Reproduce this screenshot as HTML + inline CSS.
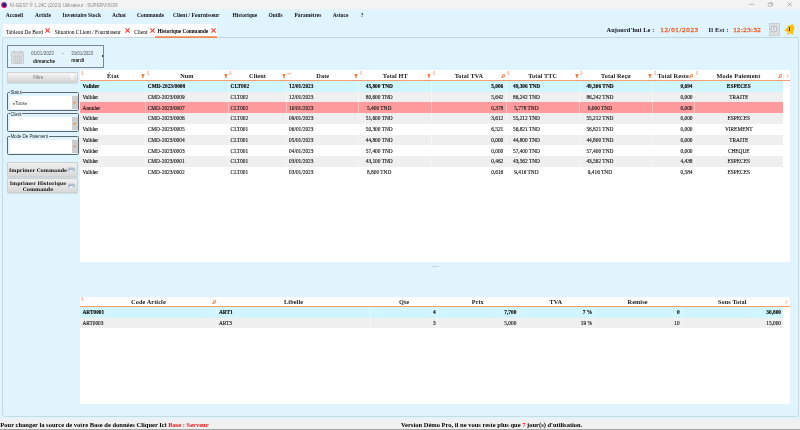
<!DOCTYPE html>
<html lang="fr"><head><meta charset="utf-8"><title>KI-GEST - Historique Commande</title>
<style>
*{box-sizing:border-box;margin:0;padding:0}
html,body{width:800px;height:430px;overflow:hidden;background:#e0f4fd}
body{position:relative;font-family:"Liberation Serif",serif;font-size:5.6px;color:#111;line-height:1}
#w{position:absolute;left:0;top:0;width:800px;height:430px;will-change:transform}
.a{position:absolute;white-space:nowrap}
.b{font-weight:bold}
.sans{font-family:"Liberation Sans",sans-serif}
#titlebar{left:0;top:0;width:800px;height:9.3px;background:#f3f3f3}
#title{left:9.800px;top:4.200px;font-size:4.65px;color:#8c8c8c}
.menu{top:12.9px;font-size:5.45px;font-weight:bold;color:#10101a}
#tabs{left:3px;top:24px;width:214px;height:13.3px;background:#fff}
.tab{top:29.5px;font-size:5.45px;color:#000}
#panel{left:2px;top:37px;width:797px;height:379.5px;border:1px solid #c9dae3;border-radius:3px;background:#e0f4fd}
#status{left:0;top:419.3px;width:800px;height:10.7px;background:#f0f0f0;border-bottom:1px solid #a5a5a5}
.st{top:421.6px;font-size:6.5px;font-weight:bold;color:#000}
.red{color:#f41414}
.org{color:#f0703a}
.tbl{background:#fff}
.hdr{font-weight:bold;font-size:6.25px;color:#1a1a1a;text-align:center;letter-spacing:.1px}
.row{left:80.3px;width:702.7px;height:10.73px}
.c{font-size:5.35px;color:#141414;-webkit-text-stroke:.12px #141414}
.sel .c{font-weight:bold;color:#000}
.grp{border:1px solid #5e686e;border-radius:1.5px}
.lbl{font-family:"Liberation Sans",sans-serif;font-size:4.5px;letter-spacing:-.06px;color:#2a2a2a;background:#e0f4fd;padding:0 .6px}
.inp{background:#fff}
.dd{background:#cdcdcd}
.btn{border:1px solid #cfcfcf;border-radius:1px;background:linear-gradient(#efefef,#d9d9d9);box-shadow:0 .6px .6px rgba(0,0,0,.18)}
.btxt{font-family:"DejaVu Serif",serif;font-weight:bold;font-size:4.85px;color:#111;text-align:center}
</style></head><body><div id="w">

<div class="a" id="titlebar"></div>
<svg class="a" style="left:1px;top:1.500px" width="6.200" height="6.200" viewBox="0 0 14 14"><defs><linearGradient id="lg" x1="0" y1="1" x2="1" y2="0"><stop offset="0" stop-color="#f0207a"/><stop offset=".45" stop-color="#c02a90"/><stop offset="1" stop-color="#3a78e0"/></linearGradient></defs><circle cx="7" cy="7" r="6.800" fill="url(#lg)"/><circle cx="7.300" cy="6.700" r="3.900" fill="#1c1548"/></svg>
<div class="a" style="left:0;top:9px;width:800px;height:1px;background:#e8f3f9"></div>
<div class="a sans" id="title">KI-GEST ® 1.24C (2023) Utilisateur : SUPERVISOR</div>
<svg class="a" style="left:745px;top:0" width="55" height="9.300" viewBox="0 0 55 9.300"><path d="M4.200 4.400h4.600" stroke="#8a8a8a" stroke-width=".55" fill="none"/><rect x="23.200" y="3.200" width="3.600" height="3.100" rx=".8" stroke="#8a8a8a" stroke-width=".55" fill="none"/><path d="M24.300 2.600h2.600a.8 .8 0 0 1 .8 .8v2.200" stroke="#8a8a8a" stroke-width=".5" fill="none"/><path d="M42.500 2.400l4.400 3.900M46.900 2.400l-4.400 3.900" stroke="#8a8a8a" stroke-width=".6" fill="none"/></svg>
<div class="a menu" style="left:5.8px">Accueil</div>
<div class="a menu" style="left:35px">Article</div>
<div class="a menu" style="left:62.6px">Inventaire Stock</div>
<div class="a menu" style="left:112px">Achat</div>
<div class="a menu" style="left:137px">Commande</div>
<div class="a menu" style="left:173px">Client / Fournisseur</div>
<div class="a menu" style="left:232.5px">Historique</div>
<div class="a menu" style="left:268.5px">Outils</div>
<div class="a menu" style="left:294.5px">Paramètres</div>
<div class="a menu" style="left:332.7px">Astuce</div>
<div class="a menu" style="left:360.8px">?</div>
<div class="a" id="tabs"></div>
<div class="a tab" style="left:6px">Tableau De Bord</div>
<svg class="a" style="left:45px;top:28.100px" width="5" height="5" viewBox="0 0 5 5"><path d="M.4 .4l4.200 4.200M4.600 .4l-4.200 4.200" stroke="#e8432e" stroke-width="1.100" fill="none"/></svg>
<div class="a tab" style="left:54.8px">Situation CLient / Fournisseur</div>
<svg class="a" style="left:125.3px;top:28.100px" width="5" height="5" viewBox="0 0 5 5"><path d="M.4 .4l4.200 4.200M4.600 .4l-4.200 4.200" stroke="#e8432e" stroke-width="1.100" fill="none"/></svg>
<div class="a tab" style="left:134.2px">Client</div>
<svg class="a" style="left:149.6px;top:28.100px" width="5" height="5" viewBox="0 0 5 5"><path d="M.4 .4l4.200 4.200M4.600 .4l-4.200 4.200" stroke="#e8432e" stroke-width="1.100" fill="none"/></svg>
<div class="a tab b" style="left:157.5px;font-size:5.2px;top:29.100px">Historique Commande</div>
<svg class="a" style="left:210.6px;top:28.100px" width="5" height="5" viewBox="0 0 5 5"><path d="M.4 .4l4.200 4.200M4.600 .4l-4.200 4.200" stroke="#e8432e" stroke-width="1.100" fill="none"/></svg>
<div class="a b" style="left:606.5px;top:26.800px;font-size:6.3px;color:#10101a;letter-spacing:.13px">Aujourd'hui Le :</div>
<div class="a" style="left:660.3px;top:26.500px;font-size:7px;color:#f4561c;-webkit-text-stroke:.28px #f4561c;letter-spacing:.65px">12/01/2023</div>
<div class="a b" style="left:708.5px;top:26.800px;font-size:6.3px;color:#10101a;letter-spacing:.28px">Il Est :</div>
<div class="a" style="left:733.2px;top:26.500px;font-size:7px;color:#f4561c;-webkit-text-stroke:.28px #f4561c;letter-spacing:.39px">12:23:32</div>
<div class="a" id="panel"></div>
<div class="a" style="left:155px;top:36px;width:62px;height:2px;background:linear-gradient(#f6b090,#ea7c4e)"></div>
<div class="a" style="left:217px;top:37px;width:580.5px;height:1px;background:#c2d4dd"></div>
<div class="a" style="left:768.8px;top:23.3px;width:11px;height:12.3px;border:1px solid #cdcdcd;background:#dedede"></div>
<svg class="a" style="left:770.2px;top:25.300px" width="8" height="8" viewBox="0 0 16 16"><circle cx="8" cy="8" r="6" fill="#ececec" stroke="#aab2ba" stroke-width="1.700"/><path d="M7.600 4.300V8.500l2.200 2.200" stroke="#5f97d4" stroke-width="1.500" fill="none"/></svg>
<svg class="a" style="left:783.900px;top:22.900px" width="12.700" height="12.700" viewBox="0 0 24 24"><g transform="rotate(27 12 12)"><path d="M12 1.500c-1 0-1.600 .7-1.700 1.600C6.500 4.200 5 7.500 5 11c0 3.500-.8 5.500-3 7.800h20c-2.200-2.300-3-4.300-3-7.800 0-3.500-1.500-6.800-5.300-7.900C13.600 2.200 13 1.500 12 1.500z" fill="#fbc10c"/><path d="M9 20h6a3 3 0 0 1-6 0z" fill="#fbc10c"/></g></svg>
<div class="a b" style="left:788px;top:26.900px;font-size:5.8px;color:#18240c">1</div>
<div class="a" style="left:7px;top:45px;width:97.3px;height:22.7px;border:1px solid #7d878d;border-radius:.5px;background:#e4f4fc"></div>
<svg class="a" style="left:10.800px;top:49.500px" width="13" height="14" viewBox="0 0 26 28"><rect x="1" y="3.500" width="24" height="23.500" rx="1.500" fill="#e6eaed" stroke="#b4b9bd" stroke-width="1.300"/><rect x="1.600" y="4" width="22.800" height="5.500" fill="#d4d9dd"/><path d="M4.500 13.500h17M4.500 17.500h17M4.500 21.500h17M4.500 24.500h17M8.500 11.500v13M13 11.500v13M17.500 11.500v13M4.500 11.500v13M21.500 11.500v13M4.500 11.500h17" stroke="#b3b8bc" stroke-width="1" fill="none"/><path d="M6.500 1v5M19.500 1v5" stroke="#b9bdc0" stroke-width="1.500"/></svg>
<div class="a sans" style="left:31px;top:52px;font-size:4.55px;color:#555">01/01/2023</div>
<div class="a sans" style="left:62.200px;top:51.600px;font-size:4.55px;color:#555">-</div>
<div class="a sans" style="left:71.200px;top:52px;font-size:4.55px;letter-spacing:-.07px;color:#555">31/01/2023</div>
<div class="a sans b" style="left:33px;top:60px;font-size:4.75px;color:#222">dimanche</div>
<div class="a sans b" style="left:71.200px;top:59.200px;font-size:4.75px;color:#222">mardi</div>
<div class="a" style="left:101.5px;top:55.200px;width:1.3px;height:1.6px;background:#333"></div>
<div class="a btn" style="left:7.2px;top:72.300px;width:70.4px;height:10.600px;background:linear-gradient(#f6f6f6,#d3d3d3);border-color:#d2d2d2"></div>
<div class="a sans" style="left:33.2px;top:76.100px;font-size:4.5px;color:#707070">Filtre</div>
<svg class="a" style="left:68.600px;top:73.800px" width="6.400" height="6.400" viewBox="0 0 8 8"><path d="M.2 .2h7.600L4.700 3.800v4L3.300 7V3.800z" fill="#fafafa"/></svg>
<div class="a grp" style="left:7px;top:92.2px;width:71.600px;height:18.4px"></div>
<div class="a inp" style="left:9.5px;top:96.4px;width:62.400px;height:12.500px"></div>
<div class="a dd" style="left:71.900px;top:96.4px;width:5.900px;height:12.500px"></div>
<div class="a lbl" style="left:9.800px;top:90.9px">Statut</div>
<div class="a sans" style="left:12.800px;top:101.5px;font-size:4.5px;color:#333">«Tous»</div>
<svg class="a" style="left:73.300px;top:102.0px" width="3.100" height="1.700" viewBox="0 0 3 1.700"><path d="M0 0h3L1.500 1.700z" fill="#e87830"/></svg>
<div class="a grp" style="left:7px;top:113.1px;width:71.600px;height:18.5px"></div>
<div class="a inp" style="left:9.5px;top:117.3px;width:62.400px;height:12.500px"></div>
<div class="a dd" style="left:71.900px;top:117.3px;width:5.900px;height:12.500px"></div>
<div class="a lbl" style="left:9.800px;top:112.5px">Client</div>
<svg class="a" style="left:73.300px;top:122.89999999999999px" width="3.100" height="1.700" viewBox="0 0 3 1.700"><path d="M0 0h3L1.500 1.700z" fill="#e87830"/></svg>
<div class="a grp" style="left:7px;top:135.8px;width:71.600px;height:19px"></div>
<div class="a inp" style="left:9.5px;top:140.0px;width:62.400px;height:12.500px"></div>
<div class="a dd" style="left:71.900px;top:140.0px;width:5.900px;height:12.500px"></div>
<div class="a lbl" style="left:9.800px;top:134.5px">Mode De Paiement</div>
<svg class="a" style="left:73.300px;top:145.60000000000002px" width="3.100" height="1.700" viewBox="0 0 3 1.700"><path d="M0 0h3L1.500 1.700z" fill="#e87830"/></svg>
<div class="a btn" style="left:7.200px;top:162.300px;width:70.400px;height:14.600px"></div>
<div class="a btxt" style="left:9.100px;top:167.500px;width:58px">Imprimer Commande</div>
<svg class="a" style="left:68.4px;top:167px" width="6.600" height="5.200" viewBox="0 0 14 11"><rect x="3" y=".4" width="8" height="3.500" fill="#eef3f8" stroke="#9aa6b4" stroke-width=".6"/><rect x=".4" y="3" width="13.200" height="5.500" rx="1.200" fill="#a9bed6" stroke="#8097b2" stroke-width=".6"/><rect x="3" y="6.500" width="8" height="4" fill="#fff" stroke="#9aa6b4" stroke-width=".6"/></svg>
<div class="a btn" style="left:7.200px;top:178.400px;width:70.400px;height:14.400px"></div>
<div class="a btxt" style="left:9.100px;top:181.300px;width:58px;line-height:5.200px">Imprimer Historique<br>Commande</div>
<svg class="a" style="left:68.4px;top:183.2px" width="6.600" height="5.200" viewBox="0 0 14 11"><rect x="3" y=".4" width="8" height="3.500" fill="#eef3f8" stroke="#9aa6b4" stroke-width=".6"/><rect x=".4" y="3" width="13.200" height="5.500" rx="1.200" fill="#a9bed6" stroke="#8097b2" stroke-width=".6"/><rect x="3" y="6.500" width="8" height="4" fill="#fff" stroke="#9aa6b4" stroke-width=".6"/></svg>
<div class="a tbl" style="left:80.3px;top:70.400px;width:710px;height:192px"></div>
<div class="a" style="left:790px;top:70px;width:1px;height:192px;background:#e6eff4"></div>
<div class="a hdr" style="left:80.3px;top:72.5px;width:65.2px">État</div>
<svg class="a" style="left:141.0px;top:74px" width="3.800" height="4.300" viewBox="0 0 8 9"><path d="M0 .3h8L5.300 4V9L2.700 7.600V4z" fill="#f2601c"/></svg>
<div class="a hdr" style="left:145.5px;top:72.5px;width:82.80000000000001px">Num</div>
<svg class="a" style="left:223.8px;top:74px" width="3.800" height="4.300" viewBox="0 0 8 9"><path d="M0 .3h8L5.300 4V9L2.700 7.600V4z" fill="#f2601c"/></svg>
<svg class="a" style="left:146.5px;top:70.8px" width="2.600" height="4.200" viewBox="0 0 5 8"><path d="M2.500 .4L4.600 4L2.500 7.600L.4 4z" fill="#fde6dc" stroke="#f6a988" stroke-width=".9"/><path d="M2.500 .3L3.600 2H1.400zM2.500 7.700L1.400 6h2.200z" fill="#f28a5e"/></svg>
<div class="a hdr" style="left:228.3px;top:72.5px;width:58.5px">Client</div>
<svg class="a" style="left:282.3px;top:74px" width="3.800" height="4.300" viewBox="0 0 8 9"><path d="M0 .3h8L5.300 4V9L2.700 7.600V4z" fill="#f2601c"/></svg>
<svg class="a" style="left:229.3px;top:70.8px" width="2.600" height="4.200" viewBox="0 0 5 8"><path d="M2.500 .4L4.600 4L2.500 7.600L.4 4z" fill="#fde6dc" stroke="#f6a988" stroke-width=".9"/><path d="M2.500 .3L3.600 2H1.400zM2.500 7.700L1.400 6h2.200z" fill="#f28a5e"/></svg>
<div class="a hdr" style="left:286.8px;top:72.5px;width:71.94999999999999px">Date</div>
<svg class="a" style="left:354.25px;top:74px" width="3.800" height="4.300" viewBox="0 0 8 9"><path d="M0 .3h8L5.300 4V9L2.700 7.600V4z" fill="#f2601c"/></svg>
<svg class="a" style="left:287.40000000000003px;top:71.6px" width="4.400" height="3" viewBox="0 0 8 6"><path d="M.5 1.500l3.500 3.500L7.500 1.500" stroke="#f26a34" stroke-width="1.300" fill="none"/></svg>
<div class="a hdr" style="left:358.75px;top:72.5px;width:73.0px">Total HT</div>
<svg class="a" style="left:427.25px;top:74px" width="3.800" height="4.300" viewBox="0 0 8 9"><path d="M0 .3h8L5.300 4V9L2.700 7.600V4z" fill="#f2601c"/></svg>
<svg class="a" style="left:359.75px;top:70.8px" width="2.600" height="4.200" viewBox="0 0 5 8"><path d="M2.500 .4L4.600 4L2.500 7.600L.4 4z" fill="#fde6dc" stroke="#f6a988" stroke-width=".9"/><path d="M2.500 .3L3.600 2H1.400zM2.500 7.700L1.400 6h2.200z" fill="#f28a5e"/></svg>
<div class="a hdr" style="left:431.75px;top:72.5px;width:74.25px">Total TVA</div>
<svg class="a" style="left:500.6px;top:74px" width="4.400" height="4.400" viewBox="0 0 9 9"><circle cx="5.600" cy="3.400" r="2.500" fill="none" stroke="#f0641f" stroke-width="1.800"/><path d="M3.700 5.300L.7 8.300" stroke="#f0641f" stroke-width="2.100"/></svg>
<svg class="a" style="left:432.75px;top:70.8px" width="2.600" height="4.200" viewBox="0 0 5 8"><path d="M2.500 .4L4.600 4L2.500 7.600L.4 4z" fill="#fde6dc" stroke="#f6a988" stroke-width=".9"/><path d="M2.500 .3L3.600 2H1.400zM2.500 7.700L1.400 6h2.200z" fill="#f28a5e"/></svg>
<div class="a hdr" style="left:506px;top:72.5px;width:73.45000000000005px">Total TTC</div>
<svg class="a" style="left:574.95px;top:74px" width="3.800" height="4.300" viewBox="0 0 8 9"><path d="M0 .3h8L5.300 4V9L2.700 7.600V4z" fill="#f2601c"/></svg>
<svg class="a" style="left:507px;top:70.8px" width="2.600" height="4.200" viewBox="0 0 5 8"><path d="M2.500 .4L4.600 4L2.500 7.600L.4 4z" fill="#fde6dc" stroke="#f6a988" stroke-width=".9"/><path d="M2.500 .3L3.600 2H1.400zM2.500 7.700L1.400 6h2.200z" fill="#f28a5e"/></svg>
<div class="a hdr" style="left:579.45px;top:72.5px;width:73.04999999999995px">Total Reçu</div>
<svg class="a" style="left:648.0px;top:74px" width="3.800" height="4.300" viewBox="0 0 8 9"><path d="M0 .3h8L5.300 4V9L2.700 7.600V4z" fill="#f2601c"/></svg>
<svg class="a" style="left:580.45px;top:70.8px" width="2.600" height="4.200" viewBox="0 0 5 8"><path d="M2.500 .4L4.600 4L2.500 7.600L.4 4z" fill="#fde6dc" stroke="#f6a988" stroke-width=".9"/><path d="M2.500 .3L3.600 2H1.400zM2.500 7.700L1.400 6h2.200z" fill="#f28a5e"/></svg>
<div class="a hdr" style="left:657.600px;top:72.5px;text-align:left;letter-spacing:.13px">Total Reste</div>
<svg class="a" style="left:689.1px;top:74px" width="4.400" height="4.400" viewBox="0 0 9 9"><circle cx="5.600" cy="3.400" r="2.500" fill="none" stroke="#f0641f" stroke-width="1.800"/><path d="M3.700 5.300L.7 8.300" stroke="#f0641f" stroke-width="2.100"/></svg>
<svg class="a" style="left:653.5px;top:70.8px" width="2.600" height="4.200" viewBox="0 0 5 8"><path d="M2.500 .4L4.600 4L2.500 7.600L.4 4z" fill="#fde6dc" stroke="#f6a988" stroke-width=".9"/><path d="M2.500 .3L3.600 2H1.400zM2.500 7.700L1.400 6h2.200z" fill="#f28a5e"/></svg>
<div class="a hdr" style="left:694.5px;top:72.5px;width:88px;letter-spacing:.17px">Mode Paiement</div>
<svg class="a" style="left:777.9000000000001px;top:74px" width="4.400" height="4.400" viewBox="0 0 9 9"><circle cx="5.600" cy="3.400" r="2.500" fill="none" stroke="#f0641f" stroke-width="1.800"/><path d="M3.700 5.300L.7 8.300" stroke="#f0641f" stroke-width="2.100"/></svg>
<svg class="a" style="left:695.5px;top:70.8px" width="2.600" height="4.200" viewBox="0 0 5 8"><path d="M2.500 .4L4.600 4L2.500 7.600L.4 4z" fill="#fde6dc" stroke="#f6a988" stroke-width=".9"/><path d="M2.500 .3L3.600 2H1.400zM2.500 7.700L1.400 6h2.200z" fill="#f28a5e"/></svg>
<svg class="a" style="left:81.2px;top:70.8px" width="2.600" height="4.200" viewBox="0 0 5 8"><path d="M2.500 .4L4.600 4L2.500 7.600L.4 4z" fill="#fde6dc" stroke="#f6a988" stroke-width=".9"/><path d="M2.500 .3L3.600 2H1.400zM2.500 7.700L1.400 6h2.200z" fill="#f28a5e"/></svg>
<svg class="a" style="left:785.500px;top:73.600px" width="3" height="4" viewBox="0 0 3 4"><path d="M.4 .3L2.600 2L.4 3.700" stroke="#f6905e" stroke-width=".6" fill="none"/></svg>
<div class="a" style="left:80.3px;top:80.100px;width:710px;height:1px;background:#f59d74"></div>
<div class="a row sel" style="top:80.85px;background:#d1f5fe">
<div class="a" style="left:64.90px;top:0;width:.7px;height:100%;background:rgba(255,255,255,.38)"></div>
<div class="a" style="left:147.70px;top:0;width:.7px;height:100%;background:rgba(255,255,255,.38)"></div>
<div class="a" style="left:206.20px;top:0;width:.7px;height:100%;background:rgba(255,255,255,.38)"></div>
<div class="a" style="left:278.15px;top:0;width:.7px;height:100%;background:rgba(255,255,255,.38)"></div>
<div class="a" style="left:351.15px;top:0;width:.7px;height:100%;background:rgba(255,255,255,.38)"></div>
<div class="a" style="left:425.40px;top:0;width:.7px;height:100%;background:rgba(255,255,255,.38)"></div>
<div class="a" style="left:498.85px;top:0;width:.7px;height:100%;background:rgba(255,255,255,.38)"></div>
<div class="a" style="left:571.90px;top:0;width:.7px;height:100%;background:rgba(255,255,255,.38)"></div>
<div class="a" style="left:613.90px;top:0;width:.7px;height:100%;background:rgba(255,255,255,.38)"></div>
<div class="a c" style="left:2.30px;top:2.75px">Valider</div>
<div class="a c" style="left:67.50px;top:2.75px">CMD-2023/0008</div>
<div class="a c" style="left:150.30px;top:2.75px">CLT002</div>
<div class="a c" style="left:208.80px;top:2.75px">12/01/2023</div>
<div class="a c" style="left:285.45px;top:2.75px">45,800 TND</div>
<div class="a c" style="right:279.70px;top:2.75px">5,006</div>
<div class="a c" style="left:432.70px;top:2.75px">49,306 TND</div>
<div class="a c" style="left:506.15px;top:2.75px">49,306 TND</div>
<div class="a c" style="right:90.50px;top:2.75px">0,694</div>
<div class="a c" style="left:614.20px;width:88.50px;text-align:center;top:2.75px">ESPECES</div>
</div>
<div class="a row" style="top:91.58px;background:#efefef">
<div class="a" style="left:64.90px;top:0;width:.7px;height:100%;background:rgba(255,255,255,.38)"></div>
<div class="a" style="left:147.70px;top:0;width:.7px;height:100%;background:rgba(255,255,255,.38)"></div>
<div class="a" style="left:206.20px;top:0;width:.7px;height:100%;background:rgba(255,255,255,.38)"></div>
<div class="a" style="left:278.15px;top:0;width:.7px;height:100%;background:rgba(255,255,255,.38)"></div>
<div class="a" style="left:351.15px;top:0;width:.7px;height:100%;background:rgba(255,255,255,.38)"></div>
<div class="a" style="left:425.40px;top:0;width:.7px;height:100%;background:rgba(255,255,255,.38)"></div>
<div class="a" style="left:498.85px;top:0;width:.7px;height:100%;background:rgba(255,255,255,.38)"></div>
<div class="a" style="left:571.90px;top:0;width:.7px;height:100%;background:rgba(255,255,255,.38)"></div>
<div class="a" style="left:613.90px;top:0;width:.7px;height:100%;background:rgba(255,255,255,.38)"></div>
<div class="a c" style="left:2.30px;top:3.3px">Valider</div>
<div class="a c" style="left:67.50px;top:3.3px">CMD-2023/0009</div>
<div class="a c" style="left:150.30px;top:3.3px">CLT002</div>
<div class="a c" style="left:208.80px;top:3.3px">12/01/2023</div>
<div class="a c" style="left:285.45px;top:3.3px">80,600 TND</div>
<div class="a c" style="right:279.70px;top:3.3px">5,642</div>
<div class="a c" style="left:432.70px;top:3.3px">86,242 TND</div>
<div class="a c" style="left:506.15px;top:3.3px">86,242 TND</div>
<div class="a c" style="right:90.50px;top:3.3px">0,000</div>
<div class="a c" style="left:614.20px;width:88.50px;text-align:center;top:3.3px">TRAITE</div>
</div>
<div class="a row" style="top:102.31px;background:#ff9a9d">
<div class="a" style="left:64.90px;top:0;width:.7px;height:100%;background:rgba(255,255,255,.38)"></div>
<div class="a" style="left:147.70px;top:0;width:.7px;height:100%;background:rgba(255,255,255,.38)"></div>
<div class="a" style="left:206.20px;top:0;width:.7px;height:100%;background:rgba(255,255,255,.38)"></div>
<div class="a" style="left:278.15px;top:0;width:.7px;height:100%;background:rgba(255,255,255,.38)"></div>
<div class="a" style="left:351.15px;top:0;width:.7px;height:100%;background:rgba(255,255,255,.38)"></div>
<div class="a" style="left:425.40px;top:0;width:.7px;height:100%;background:rgba(255,255,255,.38)"></div>
<div class="a" style="left:498.85px;top:0;width:.7px;height:100%;background:rgba(255,255,255,.38)"></div>
<div class="a" style="left:571.90px;top:0;width:.7px;height:100%;background:rgba(255,255,255,.38)"></div>
<div class="a" style="left:613.90px;top:0;width:.7px;height:100%;background:rgba(255,255,255,.38)"></div>
<div class="a c" style="left:2.30px;top:3.3px">Annuler</div>
<div class="a c" style="left:67.50px;top:3.3px">CMD-2023/0007</div>
<div class="a c" style="left:150.30px;top:3.3px">CLT002</div>
<div class="a c" style="left:208.80px;top:3.3px">10/01/2023</div>
<div class="a c" style="left:285.45px;top:3.3px">&nbsp;5,400 TND</div>
<div class="a c" style="right:279.70px;top:3.3px">0,378</div>
<div class="a c" style="left:432.70px;top:3.3px">&nbsp;5,778 TND</div>
<div class="a c" style="left:506.15px;top:3.3px">&nbsp;0,000 TND</div>
<div class="a c" style="right:90.50px;top:3.3px">0,000</div>
<div class="a c" style="left:614.20px;width:88.50px;text-align:center;top:3.3px"></div>
</div>
<div class="a row" style="top:113.04px;background:#efefef">
<div class="a" style="left:64.90px;top:0;width:.7px;height:100%;background:rgba(255,255,255,.38)"></div>
<div class="a" style="left:147.70px;top:0;width:.7px;height:100%;background:rgba(255,255,255,.38)"></div>
<div class="a" style="left:206.20px;top:0;width:.7px;height:100%;background:rgba(255,255,255,.38)"></div>
<div class="a" style="left:278.15px;top:0;width:.7px;height:100%;background:rgba(255,255,255,.38)"></div>
<div class="a" style="left:351.15px;top:0;width:.7px;height:100%;background:rgba(255,255,255,.38)"></div>
<div class="a" style="left:425.40px;top:0;width:.7px;height:100%;background:rgba(255,255,255,.38)"></div>
<div class="a" style="left:498.85px;top:0;width:.7px;height:100%;background:rgba(255,255,255,.38)"></div>
<div class="a" style="left:571.90px;top:0;width:.7px;height:100%;background:rgba(255,255,255,.38)"></div>
<div class="a" style="left:613.90px;top:0;width:.7px;height:100%;background:rgba(255,255,255,.38)"></div>
<div class="a c" style="left:2.30px;top:3.3px">Valider</div>
<div class="a c" style="left:67.50px;top:3.3px">CMD-2023/0006</div>
<div class="a c" style="left:150.30px;top:3.3px">CLT002</div>
<div class="a c" style="left:208.80px;top:3.3px">09/01/2023</div>
<div class="a c" style="left:285.45px;top:3.3px">51,600 TND</div>
<div class="a c" style="right:279.70px;top:3.3px">3,612</div>
<div class="a c" style="left:432.70px;top:3.3px">55,212 TND</div>
<div class="a c" style="left:506.15px;top:3.3px">55,212 TND</div>
<div class="a c" style="right:90.50px;top:3.3px">0,000</div>
<div class="a c" style="left:614.20px;width:88.50px;text-align:center;top:3.3px">ESPECES</div>
</div>
<div class="a row" style="top:123.77px;background:#ffffff">
<div class="a" style="left:64.90px;top:0;width:.7px;height:100%;background:rgba(255,255,255,.38)"></div>
<div class="a" style="left:147.70px;top:0;width:.7px;height:100%;background:rgba(255,255,255,.38)"></div>
<div class="a" style="left:206.20px;top:0;width:.7px;height:100%;background:rgba(255,255,255,.38)"></div>
<div class="a" style="left:278.15px;top:0;width:.7px;height:100%;background:rgba(255,255,255,.38)"></div>
<div class="a" style="left:351.15px;top:0;width:.7px;height:100%;background:rgba(255,255,255,.38)"></div>
<div class="a" style="left:425.40px;top:0;width:.7px;height:100%;background:rgba(255,255,255,.38)"></div>
<div class="a" style="left:498.85px;top:0;width:.7px;height:100%;background:rgba(255,255,255,.38)"></div>
<div class="a" style="left:571.90px;top:0;width:.7px;height:100%;background:rgba(255,255,255,.38)"></div>
<div class="a" style="left:613.90px;top:0;width:.7px;height:100%;background:rgba(255,255,255,.38)"></div>
<div class="a c" style="left:2.30px;top:3.3px">Valider</div>
<div class="a c" style="left:67.50px;top:3.3px">CMD-2023/0005</div>
<div class="a c" style="left:150.30px;top:3.3px">CLT001</div>
<div class="a c" style="left:208.80px;top:3.3px">06/01/2023</div>
<div class="a c" style="left:285.45px;top:3.3px">50,300 TND</div>
<div class="a c" style="right:279.70px;top:3.3px">6,521</div>
<div class="a c" style="left:432.70px;top:3.3px">56,821 TND</div>
<div class="a c" style="left:506.15px;top:3.3px">56,821 TND</div>
<div class="a c" style="right:90.50px;top:3.3px">0,000</div>
<div class="a c" style="left:614.20px;width:88.50px;text-align:center;top:3.3px">VIREMENT</div>
</div>
<div class="a row" style="top:134.50px;background:#efefef">
<div class="a" style="left:64.90px;top:0;width:.7px;height:100%;background:rgba(255,255,255,.38)"></div>
<div class="a" style="left:147.70px;top:0;width:.7px;height:100%;background:rgba(255,255,255,.38)"></div>
<div class="a" style="left:206.20px;top:0;width:.7px;height:100%;background:rgba(255,255,255,.38)"></div>
<div class="a" style="left:278.15px;top:0;width:.7px;height:100%;background:rgba(255,255,255,.38)"></div>
<div class="a" style="left:351.15px;top:0;width:.7px;height:100%;background:rgba(255,255,255,.38)"></div>
<div class="a" style="left:425.40px;top:0;width:.7px;height:100%;background:rgba(255,255,255,.38)"></div>
<div class="a" style="left:498.85px;top:0;width:.7px;height:100%;background:rgba(255,255,255,.38)"></div>
<div class="a" style="left:571.90px;top:0;width:.7px;height:100%;background:rgba(255,255,255,.38)"></div>
<div class="a" style="left:613.90px;top:0;width:.7px;height:100%;background:rgba(255,255,255,.38)"></div>
<div class="a c" style="left:2.30px;top:3.3px">Valider</div>
<div class="a c" style="left:67.50px;top:3.3px">CMD-2023/0004</div>
<div class="a c" style="left:150.30px;top:3.3px">CLT001</div>
<div class="a c" style="left:208.80px;top:3.3px">05/01/2023</div>
<div class="a c" style="left:285.45px;top:3.3px">44,800 TND</div>
<div class="a c" style="right:279.70px;top:3.3px">0,000</div>
<div class="a c" style="left:432.70px;top:3.3px">44,800 TND</div>
<div class="a c" style="left:506.15px;top:3.3px">44,800 TND</div>
<div class="a c" style="right:90.50px;top:3.3px">0,000</div>
<div class="a c" style="left:614.20px;width:88.50px;text-align:center;top:3.3px">TRAITE</div>
</div>
<div class="a row" style="top:145.23px;background:#ffffff">
<div class="a" style="left:64.90px;top:0;width:.7px;height:100%;background:rgba(255,255,255,.38)"></div>
<div class="a" style="left:147.70px;top:0;width:.7px;height:100%;background:rgba(255,255,255,.38)"></div>
<div class="a" style="left:206.20px;top:0;width:.7px;height:100%;background:rgba(255,255,255,.38)"></div>
<div class="a" style="left:278.15px;top:0;width:.7px;height:100%;background:rgba(255,255,255,.38)"></div>
<div class="a" style="left:351.15px;top:0;width:.7px;height:100%;background:rgba(255,255,255,.38)"></div>
<div class="a" style="left:425.40px;top:0;width:.7px;height:100%;background:rgba(255,255,255,.38)"></div>
<div class="a" style="left:498.85px;top:0;width:.7px;height:100%;background:rgba(255,255,255,.38)"></div>
<div class="a" style="left:571.90px;top:0;width:.7px;height:100%;background:rgba(255,255,255,.38)"></div>
<div class="a" style="left:613.90px;top:0;width:.7px;height:100%;background:rgba(255,255,255,.38)"></div>
<div class="a c" style="left:2.30px;top:3.3px">Valider</div>
<div class="a c" style="left:67.50px;top:3.3px">CMD-2023/0003</div>
<div class="a c" style="left:150.30px;top:3.3px">CLT001</div>
<div class="a c" style="left:208.80px;top:3.3px">04/01/2023</div>
<div class="a c" style="left:285.45px;top:3.3px">57,400 TND</div>
<div class="a c" style="right:279.70px;top:3.3px">0,000</div>
<div class="a c" style="left:432.70px;top:3.3px">57,400 TND</div>
<div class="a c" style="left:506.15px;top:3.3px">57,400 TND</div>
<div class="a c" style="right:90.50px;top:3.3px">0,000</div>
<div class="a c" style="left:614.20px;width:88.50px;text-align:center;top:3.3px">CHEQUE</div>
</div>
<div class="a row" style="top:155.96px;background:#efefef">
<div class="a" style="left:64.90px;top:0;width:.7px;height:100%;background:rgba(255,255,255,.38)"></div>
<div class="a" style="left:147.70px;top:0;width:.7px;height:100%;background:rgba(255,255,255,.38)"></div>
<div class="a" style="left:206.20px;top:0;width:.7px;height:100%;background:rgba(255,255,255,.38)"></div>
<div class="a" style="left:278.15px;top:0;width:.7px;height:100%;background:rgba(255,255,255,.38)"></div>
<div class="a" style="left:351.15px;top:0;width:.7px;height:100%;background:rgba(255,255,255,.38)"></div>
<div class="a" style="left:425.40px;top:0;width:.7px;height:100%;background:rgba(255,255,255,.38)"></div>
<div class="a" style="left:498.85px;top:0;width:.7px;height:100%;background:rgba(255,255,255,.38)"></div>
<div class="a" style="left:571.90px;top:0;width:.7px;height:100%;background:rgba(255,255,255,.38)"></div>
<div class="a" style="left:613.90px;top:0;width:.7px;height:100%;background:rgba(255,255,255,.38)"></div>
<div class="a c" style="left:2.30px;top:3.3px">Valider</div>
<div class="a c" style="left:67.50px;top:3.3px">CMD-2023/0001</div>
<div class="a c" style="left:150.30px;top:3.3px">CLT001</div>
<div class="a c" style="left:208.80px;top:3.3px">03/01/2023</div>
<div class="a c" style="left:285.45px;top:3.3px">43,100 TND</div>
<div class="a c" style="right:279.70px;top:3.3px">0,462</div>
<div class="a c" style="left:432.70px;top:3.3px">43,562 TND</div>
<div class="a c" style="left:506.15px;top:3.3px">43,562 TND</div>
<div class="a c" style="right:90.50px;top:3.3px">4,438</div>
<div class="a c" style="left:614.20px;width:88.50px;text-align:center;top:3.3px">ESPECES</div>
</div>
<div class="a row" style="top:166.69px;background:#ffffff">
<div class="a" style="left:64.90px;top:0;width:.7px;height:100%;background:rgba(255,255,255,.38)"></div>
<div class="a" style="left:147.70px;top:0;width:.7px;height:100%;background:rgba(255,255,255,.38)"></div>
<div class="a" style="left:206.20px;top:0;width:.7px;height:100%;background:rgba(255,255,255,.38)"></div>
<div class="a" style="left:278.15px;top:0;width:.7px;height:100%;background:rgba(255,255,255,.38)"></div>
<div class="a" style="left:351.15px;top:0;width:.7px;height:100%;background:rgba(255,255,255,.38)"></div>
<div class="a" style="left:425.40px;top:0;width:.7px;height:100%;background:rgba(255,255,255,.38)"></div>
<div class="a" style="left:498.85px;top:0;width:.7px;height:100%;background:rgba(255,255,255,.38)"></div>
<div class="a" style="left:571.90px;top:0;width:.7px;height:100%;background:rgba(255,255,255,.38)"></div>
<div class="a" style="left:613.90px;top:0;width:.7px;height:100%;background:rgba(255,255,255,.38)"></div>
<div class="a c" style="left:2.30px;top:3.3px">Valider</div>
<div class="a c" style="left:67.50px;top:3.3px">CMD-2023/0002</div>
<div class="a c" style="left:150.30px;top:3.3px">CLT001</div>
<div class="a c" style="left:208.80px;top:3.3px">03/01/2023</div>
<div class="a c" style="left:285.45px;top:3.3px">&nbsp;8,800 TND</div>
<div class="a c" style="right:279.70px;top:3.3px">0,616</div>
<div class="a c" style="left:432.70px;top:3.3px">&nbsp;9,416 TND</div>
<div class="a c" style="left:506.15px;top:3.3px">&nbsp;9,416 TND</div>
<div class="a c" style="right:90.50px;top:3.3px">0,584</div>
<div class="a c" style="left:614.20px;width:88.50px;text-align:center;top:3.3px">ESPECES</div>
</div>
<div class="a" style="left:432px;top:266px;width:7px;height:1px;background:#c6d6de"></div>
<div class="a tbl" style="left:80.3px;top:296.600px;width:710px;height:107.200px"></div>
<div class="a" style="left:790px;top:297px;width:1px;height:107px;background:#e6eff4"></div>
<div class="a hdr" style="left:80.3px;top:298.800px;width:136.3px">Code Article</div>
<div class="a hdr" style="left:216.6px;top:298.800px;width:154.00000000000003px">Libelle</div>
<div class="a hdr" style="left:370.6px;top:298.800px;width:67.0px">Qte</div>
<div class="a hdr" style="left:437.6px;top:298.800px;width:80.39999999999998px">Prix</div>
<div class="a hdr" style="left:518px;top:298.800px;width:75.60000000000002px">TVA</div>
<div class="a hdr" style="left:593.6px;top:298.800px;width:88.0px">Remise</div>
<div class="a hdr" style="left:681.6px;top:298.800px;width:101.39999999999998px">Sous Total</div>
<svg class="a" style="left:211.6px;top:299.7px" width="4.400" height="4.400" viewBox="0 0 9 9"><circle cx="5.600" cy="3.400" r="2.500" fill="none" stroke="#f0641f" stroke-width="1.800"/><path d="M3.700 5.300L.7 8.300" stroke="#f0641f" stroke-width="2.100"/></svg>
<svg class="a" style="left:81.2px;top:296.9px" width="2.600" height="4.200" viewBox="0 0 5 8"><path d="M2.500 .4L4.600 4L2.500 7.600L.4 4z" fill="#fde6dc" stroke="#f6a988" stroke-width=".9"/><path d="M2.500 .3L3.600 2H1.400zM2.500 7.700L1.400 6h2.200z" fill="#f28a5e"/></svg>
<svg class="a" style="left:785.300px;top:299.800px" width="3" height="4" viewBox="0 0 3 4"><path d="M.4 .3L2.600 2L.4 3.700" stroke="#f6905e" stroke-width=".6" fill="none"/></svg>
<div class="a" style="left:80.3px;top:306.200px;width:710px;height:1px;background:#f59d74"></div>
<div class="a row sel" style="top:307.00px;height:10.6px;background:#d1f5fe">
<div class="a" style="left:136.00px;top:0;width:.7px;height:100%;background:rgba(255,255,255,.38)"></div>
<div class="a" style="left:290.00px;top:0;width:.7px;height:100%;background:rgba(255,255,255,.38)"></div>
<div class="a" style="left:357.00px;top:0;width:.7px;height:100%;background:rgba(255,255,255,.38)"></div>
<div class="a" style="left:437.40px;top:0;width:.7px;height:100%;background:rgba(255,255,255,.38)"></div>
<div class="a" style="left:513.00px;top:0;width:.7px;height:100%;background:rgba(255,255,255,.38)"></div>
<div class="a" style="left:601.00px;top:0;width:.7px;height:100%;background:rgba(255,255,255,.38)"></div>
<div class="a c" style="left:2.1px;top:2.7px">ART0001</div>
<div class="a c" style="left:138.70px;top:2.7px">ART1</div>
<div class="a c" style="right:347.40px;top:2.7px">4</div>
<div class="a c" style="right:266.60px;top:2.7px">7,700</div>
<div class="a c" style="right:191.00px;top:2.7px">7 %</div>
<div class="a c" style="right:103.40px;top:2.7px">0</div>
<div class="a c" style="right:2.00px;top:2.7px">30,800</div>
</div>
<div class="a row" style="top:317.60px;height:10.9px;background:#efefef">
<div class="a" style="left:136.00px;top:0;width:.7px;height:100%;background:rgba(255,255,255,.38)"></div>
<div class="a" style="left:290.00px;top:0;width:.7px;height:100%;background:rgba(255,255,255,.38)"></div>
<div class="a" style="left:357.00px;top:0;width:.7px;height:100%;background:rgba(255,255,255,.38)"></div>
<div class="a" style="left:437.40px;top:0;width:.7px;height:100%;background:rgba(255,255,255,.38)"></div>
<div class="a" style="left:513.00px;top:0;width:.7px;height:100%;background:rgba(255,255,255,.38)"></div>
<div class="a" style="left:601.00px;top:0;width:.7px;height:100%;background:rgba(255,255,255,.38)"></div>
<div class="a c" style="left:2.1px;top:3.2px">ART0003</div>
<div class="a c" style="left:138.70px;top:3.2px">ART3</div>
<div class="a c" style="right:347.40px;top:3.2px">3</div>
<div class="a c" style="right:266.60px;top:3.2px">5,000</div>
<div class="a c" style="right:191.00px;top:3.2px">19 %</div>
<div class="a c" style="right:103.40px;top:3.2px">10</div>
<div class="a c" style="right:2.00px;top:3.2px">15,000</div>
</div>
<div class="a" id="status"></div>
<div class="a st" style="left:0.3px">Pour changer la source de votre Base de données Cliquer Ici <span class="red">Base : Serveur</span></div>
<div class="a st" style="left:401px">Version Démo Pro, il ne vous reste plus que <span class="red">7</span> jour(s) d'utilisation.</div>
</div></body></html>
